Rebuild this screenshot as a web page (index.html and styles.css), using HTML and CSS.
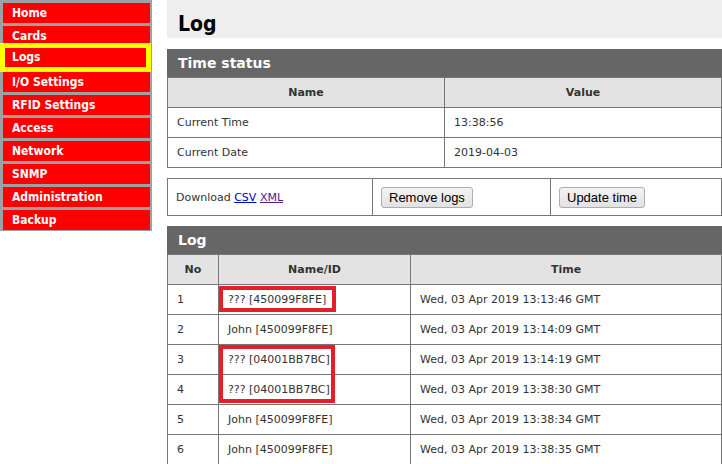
FILE: index.html
```html
<!DOCTYPE html>
<html lang="en">
  <head>
    <meta charset="UTF-8" />
    <meta name="viewport" content="width=device-width, initial-scale=1.0" />
    <title>Log</title>
    <link rel="stylesheet" href="styles.css">
  </head>

  <body>
    <div class="page">
      <ul class="menu">
        <li><a href="#">Home</a></li>
        <li><a href="#">Cards</a></li>
        <li class="active"><a href="#">Logs</a></li>
        <li><a href="#">I/O Settings</a></li>
        <li><a href="#">RFID Settings</a></li>
        <li><a href="#">Access</a></li>
        <li><a href="#">Network</a></li>
        <li><a href="#">SNMP</a></li>
        <li><a href="#">Administration</a></li>
        <li><a href="#">Backup</a></li>
      </ul>

      <div class="content">
        <h1 class="page-title">Log</h1>

        <div class="panel">
          <div class="panel-title">Time status</div>
          <table class="grid status">
            <tr>
              <th class="col-name">Name</th>
              <th>Value</th>
            </tr>
            <tr>
              <td>Current Time</td>
              <td>13:38:56</td>
            </tr>
            <tr>
              <td>Current Date</td>
              <td>2019-04-03</td>
            </tr>
          </table>
        </div>

        <table class="grid actions">
          <tr>
            <td class="col-download">Download <a href="#" class="csv">CSV</a> <a href="#" class="xml">XML</a></td>
            <td class="col-remove"><button type="button">Remove logs</button></td>
            <td><button type="button">Update time</button></td>
          </tr>
        </table>

        <div class="panel">
          <div class="panel-title">Log</div>
          <table class="grid log">
            <tr>
              <th class="col-no">No</th>
              <th class="col-id">Name/ID</th>
              <th>Time</th>
            </tr>
            <tr><td>1</td><td>??? [450099F8FE]</td><td>Wed, 03 Apr 2019 13:13:46 GMT</td></tr>
            <tr><td>2</td><td>John [450099F8FE]</td><td>Wed, 03 Apr 2019 13:14:09 GMT</td></tr>
            <tr><td>3</td><td>??? [04001BB7BC]</td><td>Wed, 03 Apr 2019 13:14:19 GMT</td></tr>
            <tr><td>4</td><td>??? [04001BB7BC]</td><td>Wed, 03 Apr 2019 13:38:30 GMT</td></tr>
            <tr><td>5</td><td>John [450099F8FE]</td><td>Wed, 03 Apr 2019 13:38:34 GMT</td></tr>
            <tr><td>6</td><td>John [450099F8FE]</td><td>Wed, 03 Apr 2019 13:38:35 GMT</td></tr>
          </table>
        </div>

        <!-- annotation boxes -->
        <span class="mark mark-one"></span>
        <span class="mark mark-two"></span>
      </div>
    </div>
  </body>
</html>
```

FILE: styles.css
```css
body {
  margin: 0;
  background: #fff;
  font-family: "DejaVu Sans", Verdana, sans-serif;
}

.page {
  display: flex;
  align-items: flex-start;
}

/* left menu */
.menu {
  list-style: none;
  margin: 0;
  padding: 3px 2px 1px 3px;
  width: 147px;
  background: #a0a0a0;
}

.menu li {
  height: 20px;
  margin-bottom: 3px;
  background: #ff0000;
}

.menu li:last-child {
  margin-bottom: 0;
}

.menu a {
  display: block;
  padding-left: 9px;
  line-height: 20px;
  color: #fff;
  text-decoration: none;
  font-family: "DejaVu Sans Condensed", "DejaVu Sans", sans-serif;
  font-stretch: condensed;
  font-weight: bold;
  font-size: 12px;
}

.menu li.active {
  position: relative;
  box-sizing: border-box;
  height: 29px;
  margin: -6px -1px 0 -3px;
  border: 5px solid #ffff00;
}

.menu li.active a {
  padding-left: 7px;
  line-height: 19px;
}

/* main area */
.content {
  position: relative;
  flex: 1;
  margin-left: 15px;
}

.page-title {
  margin: 0;
  height: 28px;
  padding: 10px 0 0 11px;
  background: #eeeeee;
  color: #000;
  font-family: "DejaVu Sans Condensed", "DejaVu Sans", sans-serif;
  font-stretch: condensed;
  font-size: 21px;
  line-height: 28px;
}

.panel {
  margin-top: 11px;
}

.panel-title {
  height: 28px;
  padding-left: 11px;
  background: #666666;
  color: #fff;
  font-weight: bold;
  font-size: 14px;
  line-height: 28px;
}

.grid {
  width: 100%;
  border-collapse: collapse;
  font-size: 11px;
  color: #333;
}

.grid th,
.grid td {
  height: 29px;
  padding: 0 9px;
  border: 1px solid #777;
  text-align: left;
}

.grid th {
  background: #e3e3e3;
  text-align: center;
  font-weight: bold;
}

.status .col-name {
  width: 258px;
}

.log .col-no {
  width: 32px;
}

.log .col-id {
  width: 173px;
}

.actions {
  margin-top: 10px;
}

.actions td {
  height: 36px;
  padding: 0 7px 0 8px;
}

.actions .col-download {
  width: 189px;
}

.actions .col-remove {
  width: 162px;
}

.actions a.csv {
  color: #0000cc;
}

.actions a.xml {
  color: #551a8b;
}

.actions button {
  height: 21px;
  padding: 0 7px;
  border: 1px solid #adadad;
  border-radius: 3px;
  background: linear-gradient(#f3f3f3, #e2e2e2);
  color: #000;
  font-family: "Liberation Sans", Arial, sans-serif;
  font-size: 13px;
}

.panel + .actions + .panel {
  margin-top: 10px;
}

/* red annotation frames */
.mark {
  position: absolute;
  left: 52px;
  box-sizing: border-box;
  border: 4px solid #e41e2b;
}

.mark-one {
  top: 286px;
  width: 117px;
  height: 26px;
}

.mark-two {
  top: 345px;
  width: 116px;
  height: 58px;
}
```
